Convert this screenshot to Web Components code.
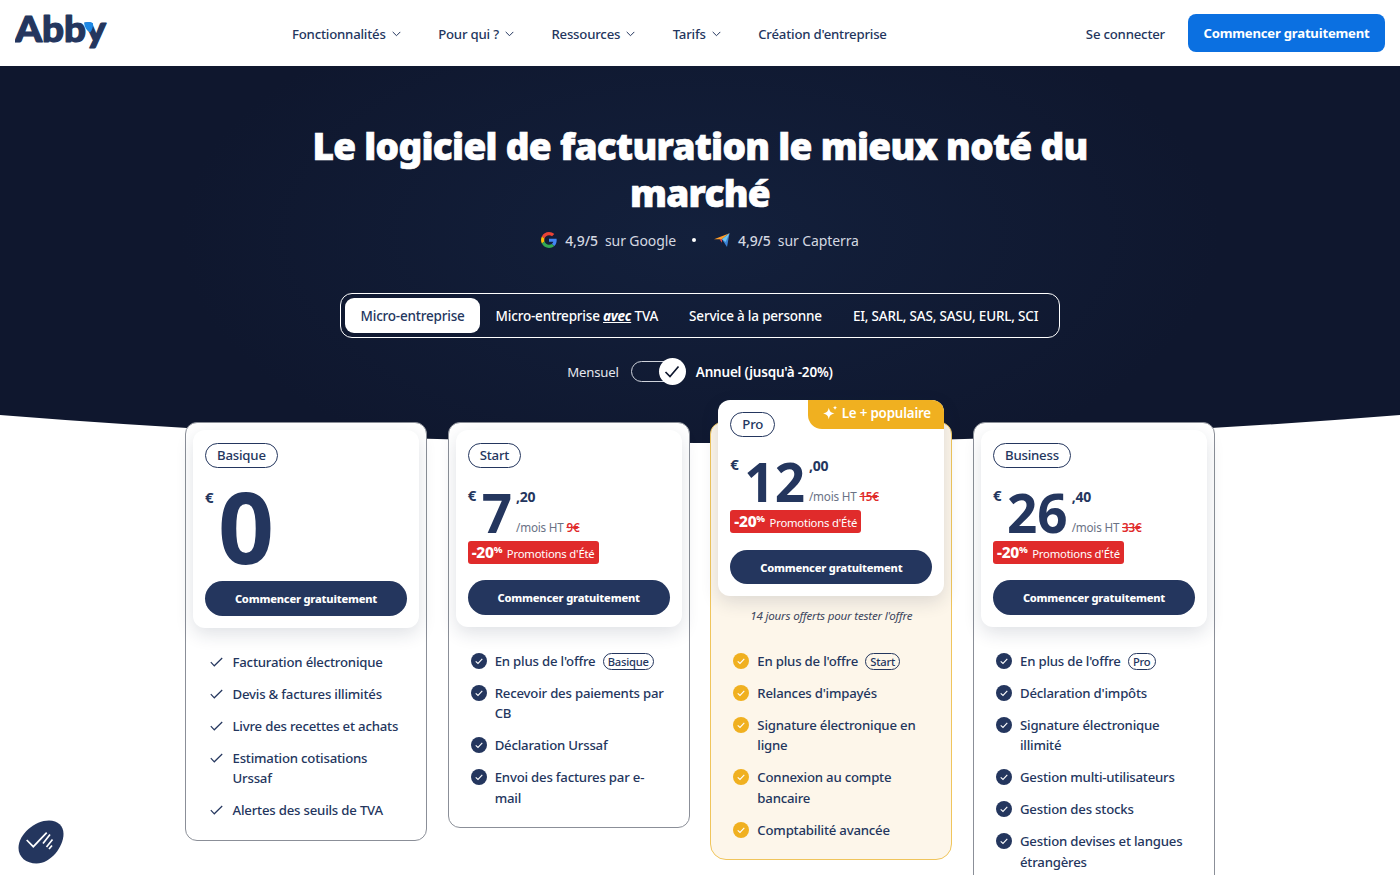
<!DOCTYPE html>
<html lang="fr">
<head>
<meta charset="utf-8">
<title>Abby - Tarifs</title>
<style>
    html, body { margin: 0; height: 875px; overflow: hidden; background: #fff; }
    body { font-family: "Noto Sans", "Liberation Sans", sans-serif; color: #24365e; letter-spacing: -.2px; }
</style>
</head>
<body>
<abby-header></abby-header>
<pricing-hero></pricing-hero>
<plan-grid>
    <plan-card name="Basique" euros="0" big>
        <feature-item kind="plain">Facturation électronique</feature-item>
        <feature-item kind="plain">Devis &amp; factures illimités</feature-item>
        <feature-item kind="plain">Livre des recettes et achats</feature-item>
        <feature-item kind="plain">Estimation cotisations Urssaf</feature-item>
        <feature-item kind="plain">Alertes des seuils de TVA</feature-item>
    </plan-card>
    <plan-card name="Start" euros="7" cents=",20" old="9€">
        <feature-item>En plus de l'offre <offer-chip>Basique</offer-chip></feature-item>
        <feature-item>Recevoir des paiements par CB</feature-item>
        <feature-item>Déclaration Urssaf</feature-item>
        <feature-item>Envoi des factures par e-mail</feature-item>
    </plan-card>
    <plan-card name="Pro" euros="12" cents=",00" old="15€" popular>
        <feature-item kind="gold">En plus de l'offre <offer-chip>Start</offer-chip></feature-item>
        <feature-item kind="gold">Relances d'impayés</feature-item>
        <feature-item kind="gold">Signature électronique en ligne</feature-item>
        <feature-item kind="gold">Connexion au compte bancaire</feature-item>
        <feature-item kind="gold">Comptabilité avancée</feature-item>
    </plan-card>
    <plan-card name="Business" euros="26" cents=",40" old="33€">
        <feature-item>En plus de l'offre <offer-chip>Pro</offer-chip></feature-item>
        <feature-item>Déclaration d'impôts</feature-item>
        <feature-item>Signature électronique illimité</feature-item>
        <feature-item>Gestion multi-utilisateurs</feature-item>
        <feature-item>Gestion des stocks</feature-item>
        <feature-item>Gestion devises et langues étrangères</feature-item>
    </plan-card>
</plan-grid>
<chat-widget></chat-widget>

<script>
const chevron = `<svg width="9" height="6" viewBox="0 0 9 6" fill="none" stroke="#24365e" stroke-width="1"><path d="M.7.9l3.800 3.800L8.300.9"/></svg>`;

class NavItem extends HTMLElement {
    constructor() {
        super();
        this.attachShadow({ mode: "open" }).innerHTML = `
      <style>
        :host { display: inline-flex; align-items: center; gap: 6px; font-size: 13.2px; font-weight: 500; color: #24365e; white-space: nowrap; padding-top: 1px; }
      </style>
      <slot></slot>${this.hasAttribute("menu") ? chevron : ""}`;
    }
}
customElements.define("nav-item", NavItem);

class AbbyHeader extends HTMLElement {
    constructor() {
        super();
        this.attachShadow({ mode: "open" }).innerHTML = `
      <style>
        :host { display: flex; align-items: center; height: 66px; background: #fff; padding: 0 15px; box-sizing: border-box; }
        .logo { flex: none; display: block; width: 277px; height: 66px; }
        .logo text { font-family: "Lato", sans-serif; font-weight: 900; font-size: 36px; letter-spacing: 0; fill: #24365e; stroke: #24365e; stroke-width: 1.200; stroke-linejoin: round; }
        nav { display: flex; align-items: center; gap: 37.500px; }
        .right { margin-left: auto; display: flex; align-items: center; gap: 23px; }
        .cta { background: #0b70e1; color: #fff; font-size: 13.100px; font-weight: 700; height: 38px; width: 197px; border-radius: 8px; display: flex; align-items: center; justify-content: center; margin-top: -1px; }
      </style>
      <svg class="logo" viewBox="0 0 277 66">
        <text x="0" y="42" textLength="91" lengthAdjust="spacingAndGlyphs">Abby</text>
        <path d="M69 22.500c4-1 7-.5 9 .8.300 3.500-1 7.200-3 9.200-3.500-2-5.500-5.500-6-10z" fill="#1e88e5"/>
      </svg>
      <nav>
        <nav-item menu>Fonctionnalités</nav-item>
        <nav-item menu>Pour qui ?</nav-item>
        <nav-item menu>Ressources</nav-item>
        <nav-item menu>Tarifs</nav-item>
        <nav-item>Création d'entreprise</nav-item>
      </nav>
      <div class="right">
        <nav-item>Se connecter</nav-item>
        <div class="cta">Commencer gratuitement</div>
      </div>`;
    }
}
customElements.define("abby-header", AbbyHeader);

class PlanTabs extends HTMLElement {
    constructor() {
        super();
        this.attachShadow({ mode: "open" }).innerHTML = `
      <style>
        :host { display: flex; width: 720px; height: 45px; box-sizing: border-box; border: 1px solid #fff; border-radius: 12px; padding: 4px; font-size: 13.500px; font-weight: 500; color: #fff; white-space: nowrap; }
        span { display: flex; align-items: center; padding: 0 15.500px; border-radius: 9px; white-space: pre; }
        .on { background: #fff; color: #24365e; }
        em { font-weight: 700; text-decoration: underline; }
      </style>
      <span class="on">Micro-entreprise</span>
      <span>Micro-entreprise <em>avec</em> TVA</span>
      <span>Service à la personne</span>
      <span>EI, SARL, SAS, SASU, EURL, SCI</span>`;
    }
}
customElements.define("plan-tabs", PlanTabs);

class BillingToggle extends HTMLElement {
    constructor() {
        super();
        this.attachShadow({ mode: "open" }).innerHTML = `
      <style>
        :host { display: flex; align-items: center; justify-content: center; font-size: 13.200px; color: #e4e7ee; white-space: nowrap; }
        .track { position: relative; width: 50px; height: 21px; border: 1px solid #cfd3dc; border-radius: 11px; margin: 0 15px 0 12px; box-sizing: border-box; }
        .knob { position: absolute; right: -6px; top: -4px; width: 27px; height: 27px; border-radius: 50%; background: #fff; display: flex; align-items: center; justify-content: center; }
        b { font-weight: 600; font-size: 13.500px; color: #fff; }
      </style>
      <span>Mensuel</span>
      <div class="track"><div class="knob"><svg width="16" height="13" viewBox="0 0 16 13" fill="none" stroke="#0f172e" stroke-width="1.700"><path d="M1.500 7l4.500 4.500L14.500 1.500"/></svg></div></div>
      <b>Annuel (jusqu'à -20%)</b>`;
    }
}
customElements.define("billing-toggle", BillingToggle);

class PricingHero extends HTMLElement {
    constructor() {
        super();
        this.attachShadow({ mode: "open" }).innerHTML = `
      <style>
        :host { display: flex; flex-direction: column; align-items: center; box-sizing: border-box; height: 377px; padding-top: 56px; color: #fff;
          background: radial-gradient(ellipse 520px 260px at 50% 45%, #13203c 0%, #0f172e 100%);
          clip-path: circle(8750px at 50% calc(100% - 8750px)); }
        h1 { margin: 0; width: 800px; text-align: center; font-size: 37px; line-height: 47px; font-weight: 900; letter-spacing: -.7px; -webkit-text-stroke: .7px #fff; }
        .rating { display: flex; align-items: center; margin-top: 12px; height: 24px; font-size: 14px; letter-spacing: -.1px; color: #d4d8e1; white-space: pre; }
        .rating b { font-weight: 500; margin-left: 8px; }
        .dot { width: 4px; height: 4px; border-radius: 50%; background: #fff; margin: 0 18px 0 16px; }
        plan-tabs { margin-top: 41px; }
        billing-toggle { margin-top: 23px; }
      </style>
      <h1>Le logiciel de facturation le mieux noté du marché</h1>
      <div class="rating">
        <svg width="16" height="16" viewBox="0 0 48 48"><path fill="#ea4335" d="M24 9.500c3.500 0 6.700 1.300 9.100 3.500l6.800-6.800C35.800 2.400 30.200 0 24 0 14.600 0 6.500 5.400 2.600 13.200l7.900 6.200C12.400 13.700 17.700 9.500 24 9.500z"/><path fill="#4285f4" d="M47 24.500c0-1.600-.1-3.100-.4-4.500H24v9h12.900c-.6 3-2.200 5.500-4.700 7.200l7.700 6C44.400 38 47 31.800 47 24.500z"/><path fill="#fbbc05" d="M10.500 28.600c-.5-1.400-.8-3-.8-4.600s.3-3.200.8-4.600l-7.900-6.200C1 16.500 0 20.100 0 24s1 7.500 2.600 10.800l7.900-6.200z"/><path fill="#34a853" d="M24 48c6.200 0 11.900-2 15.900-5.800l-7.700-6c-2.100 1.400-4.900 2.300-8.200 2.300-6.300 0-11.600-4.200-13.500-9.900l-7.900 6.200C6.500 42.600 14.600 48 24 48z"/></svg><b>4,9/5</b><span>  sur Google</span>
        <div class="dot"></div>
        <svg width="16" height="15" viewBox="0 0 16 15"><path fill="#ff9d28" d="M0 6.300h8L15.500.3z"/><path fill="#e5484d" d="M5.500 6.300H8v3.500z"/><path fill="#3b82d6" d="M8 6.300L15.500.3 13 14z"/><path fill="#6fc6ee" d="M8 6.300L15.500.3 11.500 9z"/></svg><b>4,9/5</b><span>  sur Capterra</span>
      </div>
      <plan-tabs></plan-tabs>
      <billing-toggle></billing-toggle>`;
    }
}
customElements.define("pricing-hero", PricingHero);

class OfferChip extends HTMLElement {
    constructor() {
        super();
        this.attachShadow({ mode: "open" }).innerHTML = `
      <style>
        :host { display: inline-block; border: 1px solid #24365e; border-radius: 9px; padding: 0 4px; font-size: 11.200px; line-height: 15px; margin-left: 4px; }
      </style>
      <slot></slot>`;
    }
}
customElements.define("offer-chip", OfferChip);

class FeatureItem extends HTMLElement {
    constructor() {
        super();
        const kind = this.getAttribute("kind");
        const icon = kind === "plain"
            ? `<svg class="plain" width="13" height="10" viewBox="0 0 13 10" fill="none" stroke="#24365e" stroke-width="1.200"><path d="M.8 5.200l3.500 3.600L12.200 1"/></svg>`
            : `<svg width="16" height="16" viewBox="0 0 16 16"><circle cx="8" cy="8" r="8" fill="${kind === "gold" ? "#f0b020" : "#24365e"}"/><path d="M4.700 8.300l2.300 2.200 4.300-4.600" fill="none" stroke="#fff" stroke-width="1.100"/></svg>`;
        this.attachShadow({ mode: "open" }).innerHTML = `
      <style>
        :host { display: flex; font-size: 13.2px; line-height: 20.300px; font-weight: 500; color: #24365e; }
        .ico { flex: none; width: 24px; height: 20px; display: flex; align-items: center; }
        .plain { margin-left: 1px; }
      </style>
      <div class="ico">${icon}</div>
      <div><slot></slot></div>`;
    }
}
customElements.define("feature-item", FeatureItem);

class PlanCard extends HTMLElement {
    constructor() {
        super();
        const name = this.getAttribute("name");
        const euros = this.getAttribute("euros");
        const cents = this.getAttribute("cents");
        const old = this.getAttribute("old");
        const popular = this.hasAttribute("popular");
        const big = this.hasAttribute("big");
        const priceSide = big ? "" : `
          <div class="side"><div class="cents">${cents}</div><div class="per">/mois HT <s>${old}</s></div></div>`;
        const promo = big ? "" : `<div class="promo"><b>-20<sup>%</sup></b> Promotions d'Été</div>`;
        this.attachShadow({ mode: "open" }).innerHTML = `
      <style>
        :host { display: block; box-sizing: border-box; border: 1px solid #8b8f98; border-radius: 12px; background: #fff; padding: 7px 7px 19px; }
        :host([popular]) { background: #fdf6ea; border-color: #f0c55c; border-bottom-left-radius: 16px; border-bottom-right-radius: 16px; }
        .inner { position: relative; background: #fff; border-radius: 12px; padding: 13px 12px 12px; box-shadow: 0 6px 18px rgba(30,40,70,.14); }
        :host([popular]) .inner { margin-top: -30px; padding-top: 12px; }
        .tag { display: inline-block; box-sizing: border-box; height: 25px; line-height: 23px; border: 1px solid #24365e; border-radius: 13px; padding: 0 11px; font-size: 13.200px; font-weight: 500; }
        .price { display: flex; height: 73px; box-sizing: border-box; padding-top: 19px; }
        .cur { font-size: 15px; font-weight: 700; line-height: 17px; width: 14px; }
        .num { font-size: 53px; line-height: 54px; font-weight: 700; margin: -1px 4px 0 0; letter-spacing: 0; }
        .cents { font-size: 14px; font-weight: 700; line-height: 18px; margin-top: 1px; }
        .per { font-size: 11.700px; line-height: 14px; color: #6a7285; margin-top: 14px; white-space: nowrap; }
        .per s { color: #e02b2b; font-weight: 600; }
        .big { height: 113px; padding-top: 21px; }
        .big .num { font-size: 98px; line-height: 98px; margin-top: -12px; margin-left: -1px; }
        .promo { display: inline-block; height: 23px; line-height: 22px; background: #e02b2b; color: #fff; border-radius: 3px; padding: 0 4px; font-size: 11.300px; white-space: nowrap; vertical-align: top; }
        .promo b { font-size: 15.500px; font-weight: 800; letter-spacing: -.3px; margin-right: 2px; }
        .promo sup { font-size: 9.500px; line-height: 0; vertical-align: 5px; }
        .cta { display: flex; align-items: center; justify-content: center; height: 35px; margin-top: 16px; border-radius: 18px; background: #24365e; color: #fff; font-size: 11.100px; font-weight: 800; white-space: nowrap; }
        .big + .cta { margin-top: 0; }
        :host([popular]) .cta { height: 34px; margin-top: 17px; }
        .badge { position: absolute; right: 0; top: 0; box-sizing: border-box; width: 136px; height: 29px; padding-bottom: 3px; display: flex; align-items: center; justify-content: center; gap: 3px; background: #f0b020; color: #fff; font-size: 13.400px; font-weight: 600; border-radius: 0 12px 0 14px; }
        .trial { margin: 13px 0 0; text-align: center; font-size: 11.600px; line-height: 14px; font-style: italic; color: #3d4860; }
        .list { display: flex; flex-direction: column; gap: 11.700px; padding: 24px 15px 0 15px; }
        :host([popular]) .list { padding-top: 28px; }
        :host([big]) .list { padding-left: 15.500px; padding-top: 24px; }
      </style>
      <div class="inner">
        ${popular ? `<div class="badge"><svg width="17" height="17" viewBox="0 0 15 15" fill="#fff"><path d="M6 2.500c.7 3.200 1.800 4.300 5 5-3.200.7-4.300 1.800-5 5-.7-3.200-1.800-4.300-5-5 3.200-.7 4.300-1.800 5-5z"/><path d="M11.500.5c.3 1.300.7 1.700 2 2-1.300.3-1.700.7-2 2-.3-1.300-.7-1.700-2-2 1.300-.3 1.700-.7 2-2z"/></svg>Le + populaire</div>` : ""}
        <div class="tag">${name}</div>
        <div class="price${big ? " big" : ""}">
          <div class="cur">€</div><div class="num">${euros}</div>${priceSide}
        </div>
        ${promo}
        <div class="cta">Commencer gratuitement</div>
      </div>
      ${popular ? `<p class="trial">14 jours offerts pour tester l'offre</p>` : ""}
      <div class="list"><slot></slot></div>`;
    }
}
customElements.define("plan-card", PlanCard);

class PlanGrid extends HTMLElement {
    constructor() {
        super();
        this.attachShadow({ mode: "open" }).innerHTML = `
      <style>
        :host { display: grid; grid-template-columns: repeat(4, 242px); column-gap: 20.670px; align-items: start; justify-content: center; margin-top: -21px; position: relative; }
      </style>
      <slot></slot>`;
    }
}
customElements.define("plan-grid", PlanGrid);

class ChatWidget extends HTMLElement {
    constructor() {
        super();
        this.attachShadow({ mode: "open" }).innerHTML = `
      <style>
        :host { position: fixed; left: 18px; top: 820px; width: 46px; height: 44px; }
      </style>
      <svg width="46" height="44" viewBox="0 0 46 44">
        <path d="M31 .5C40 .5 45.500 6 45.500 14c0 13-13 29.500-27 29.500C8 43.500 .5 37 .5 28 .5 14 17 .5 31 .5z" fill="#24365e"/>
        <path d="M8.700 20l6.600 6.700L28.700 12.700M25 23.500l7-9M28.500 27l6-7.500M31 29l3-3.500" fill="none" stroke="#fff" stroke-width="1.700"/>
      </svg>`;
    }
}
customElements.define("chat-widget", ChatWidget);
</script>
</body>
</html>
